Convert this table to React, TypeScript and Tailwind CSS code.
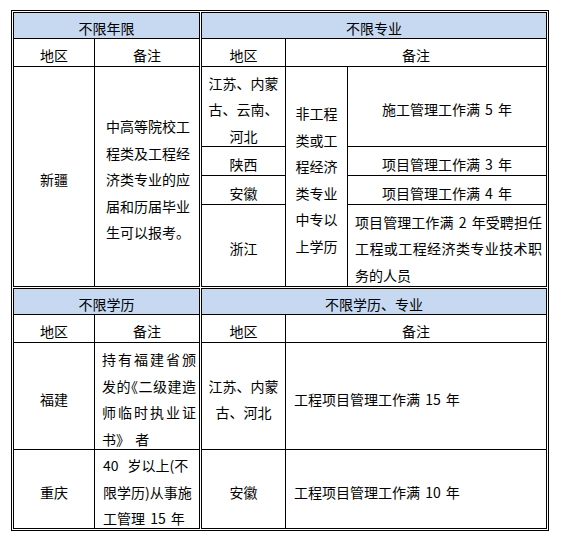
import React from "react";

const HEAD = "flex items-center justify-center bg-[#c6d9f1] pt-[5px]";
const C = "flex flex-col items-center justify-center bg-white pt-[6px] text-center";
const L = "flex flex-col justify-center bg-white pt-[6px]";

function Lines({ lines, justify = false }: { lines: string[]; justify?: boolean }) {
  return (
    <>
      {lines.map((t, i) => (
        <div
          key={i}
          className={
            justify && i < lines.length - 1
              ? "text-justify whitespace-nowrap [text-align-last:justify]"
              : "whitespace-nowrap"
          }
        >
          {t}
        </div>
      ))}
    </>
  );
}

export default function App() {
  return (
    <div className="min-h-[543px] bg-white pl-[11px] pt-[10px] font-['Noto_Sans_CJK_SC','Noto_Sans',sans-serif] text-[14px] leading-[26.5px] text-black [word-spacing:2px]">
      <div className="grid w-fit grid-cols-[187px_346px] grid-rows-[275px_241px] gap-px border border-black p-px">
        {/* 不限年限 */}
        <div className="border border-black">
          <div className="grid h-full grid-cols-[80px_104px] grid-rows-[25px_27px_219px] gap-px bg-black">
            <div className={`${HEAD} col-span-2`}>不限年限</div>
            <div className={C}>地区</div>
            <div className={C}>备注</div>
            <div className={C}>新疆</div>
            <div className={`${L} pl-[11px]`}>
              <Lines lines={["中高等院校工", "程类及工程经", "济类专业的应", "届和历届毕业", "生可以报考。"]} />
            </div>
          </div>
        </div>

        {/* 不限专业 */}
        <div className="border border-black">
          <div className="grid h-full grid-cols-[83px_61px_198px] grid-rows-[25px_27px_79px_28px_28px_81px] gap-px bg-black">
            <div className={`${HEAD} col-span-3`}>不限专业</div>
            <div className={C}>地区</div>
            <div className={`${C} col-span-2`}>备注</div>
            <div className={C}>
              <Lines lines={["江苏、内蒙", "古、云南、", "河北"]} />
            </div>
            <div className={`${C} row-span-4`}>
              <Lines lines={["非工程", "类或工", "程经济", "类专业", "中专以", "上学历"]} />
            </div>
            <div className={C}>施工管理工作满 5 年</div>
            <div className={C}>陕西</div>
            <div className={C}>项目管理工作满 3 年</div>
            <div className={C}>安徽</div>
            <div className={C}>项目管理工作满 4 年</div>
            <div className={C}>浙江</div>
            <div className={`${L} pl-[7px] pr-[4px]`}>
              <Lines
                justify
                lines={["项目管理工作满 2 年受聘担任", "工程或工程经济类专业技术职", "务的人员"]}
              />
            </div>
          </div>
        </div>

        {/* 不限学历 */}
        <div className="border border-black">
          <div className="grid h-full grid-cols-[80px_104px] grid-rows-[25px_27px_106px_78px] gap-px bg-black">
            <div className={`${HEAD} col-span-2`}>不限学历</div>
            <div className={C}>地区</div>
            <div className={C}>备注</div>
            <div className={C}>福建</div>
            <div className={`${L} pl-[7px] pr-[3px]`}>
              <div className="text-justify whitespace-nowrap [text-align-last:justify]">持有福建省颁</div>
              <div className="text-justify whitespace-nowrap [font-feature-settings:'halt'] [text-align-last:justify]">
                发的《二级建造
              </div>
              <div className="text-justify whitespace-nowrap [text-align-last:justify]">师临时执业证</div>
              <div className="whitespace-nowrap">书》 者</div>
            </div>
            <div className={C}>重庆</div>
            <div className={`${L} pl-[8px] pr-[3px]`}>
              <div className="flex whitespace-nowrap">
                <span>40</span>
                <span className="ml-[9px]">岁以上(不</span>
              </div>
              <div className="whitespace-nowrap">限学历)从事施</div>
              <div className="whitespace-nowrap">工管理 15 年</div>
            </div>
          </div>
        </div>

        {/* 不限学历、专业 */}
        <div className="border border-black">
          <div className="grid h-full grid-cols-[83px_260px] grid-rows-[25px_27px_106px_78px] gap-px bg-black">
            <div className={`${HEAD} col-span-2`}>不限学历、专业</div>
            <div className={C}>地区</div>
            <div className={C}>备注</div>
            <div className={C}>
              <Lines lines={["江苏、内蒙", "古、河北"]} />
            </div>
            <div className={`${L} pl-[8px]`}>工程项目管理工作满 15 年</div>
            <div className={C}>安徽</div>
            <div className={`${L} pl-[8px]`}>工程项目管理工作满 10 年</div>
          </div>
        </div>
      </div>
    </div>
  );
}
